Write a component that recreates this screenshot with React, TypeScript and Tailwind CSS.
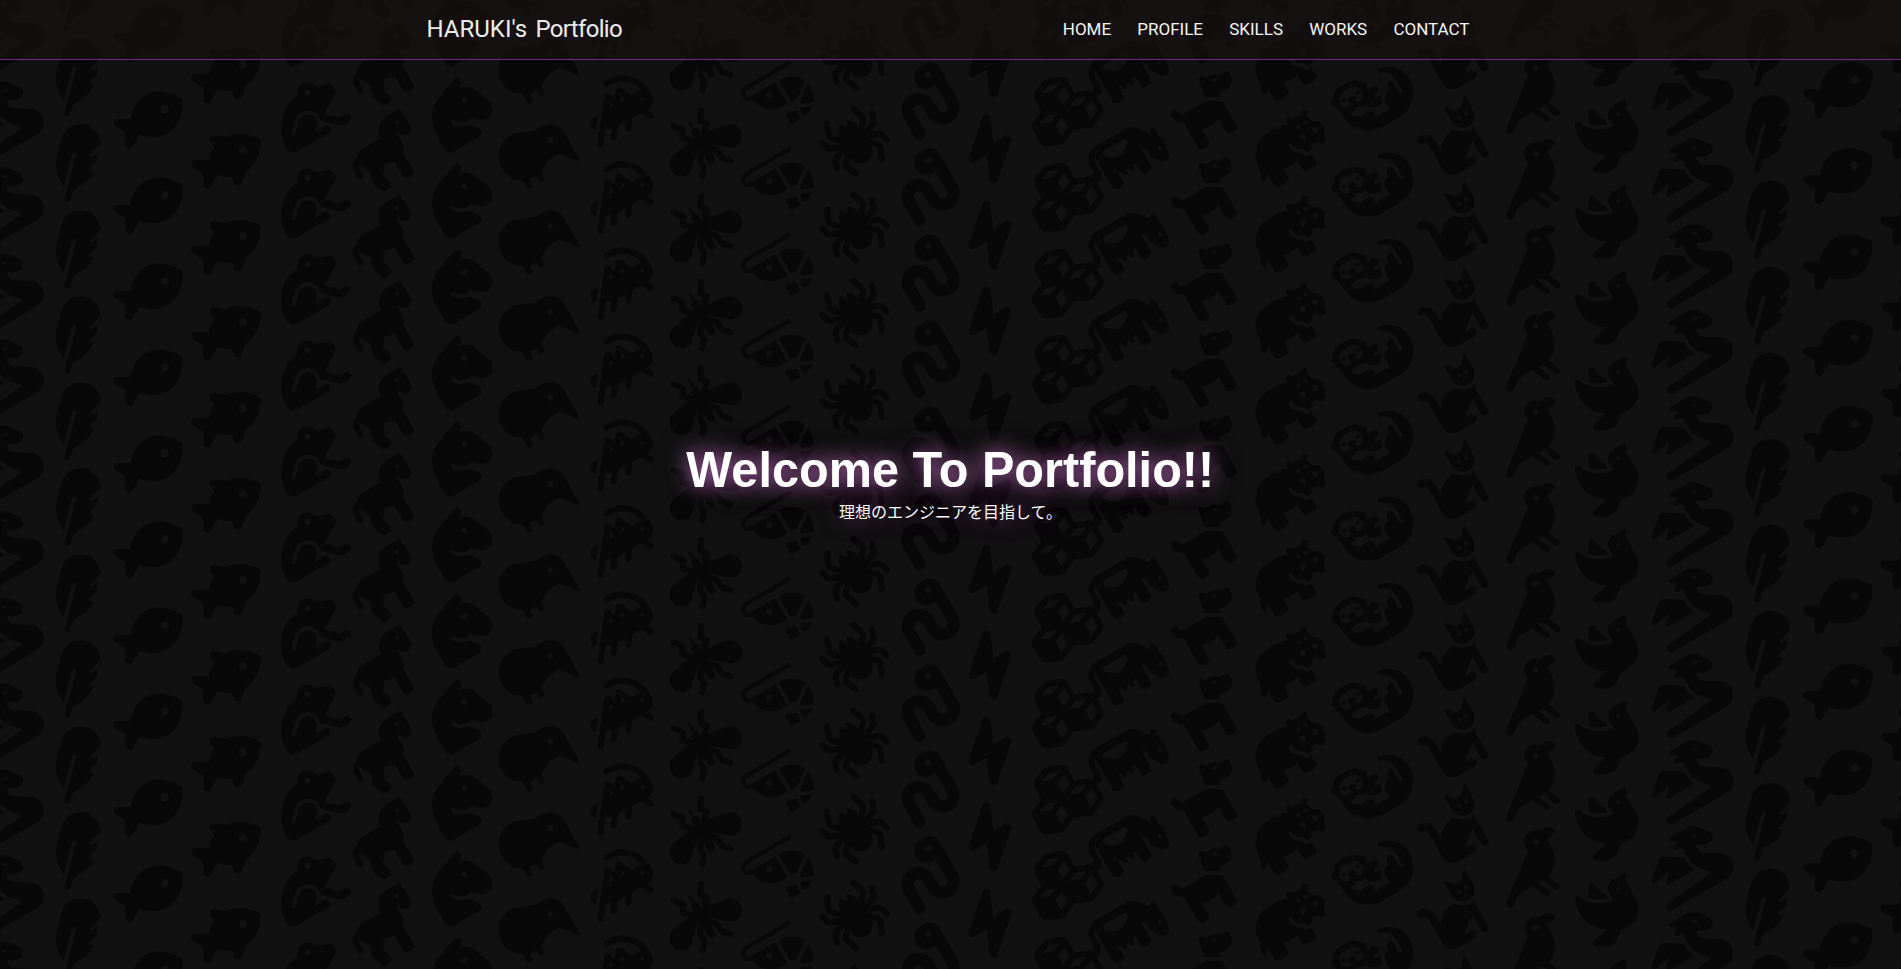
import type { IconType } from 'react-icons';
import {
  FaBolt, FaCat, FaCow, FaCrow, FaCubes, FaDog, FaDove, FaDragon, FaFeather, FaFish, FaFishFins,
  FaFrog, FaHippo, FaHorse, FaHorseHead, FaKiwiBird, FaLocust, FaMosquito, FaOtter, FaShrimp,
  FaSpider, FaWorm,
} from 'react-icons/fa6';

type Column = { Icon: IconType; x: number; size: number };

const COLUMNS: Column[] = [
  { Icon: FaFeather, x: 76.27, size: 64 },
  { Icon: FaFish, x: 151.17, size: 72 },
  { Icon: FaFishFins, x: 228.99, size: 72 },
  { Icon: FaFrog, x: 307.62, size: 72 },
  { Icon: FaHorse, x: 385.47, size: 72 },
  { Icon: FaHorseHead, x: 460.1, size: 80 },
  { Icon: FaKiwiBird, x: 534.99, size: 72 },
  { Icon: FaLocust, x: 616.67, size: 72 },
  { Icon: FaMosquito, x: 701.82, size: 80 },
  { Icon: FaShrimp, x: 779.92, size: 64 },
  { Icon: FaSpider, x: 854.5, size: 64 },
  { Icon: FaWorm, x: 925.7, size: 64 },
  { Icon: FaBolt, x: 990, size: 64 },
  { Icon: FaCubes, x: 1061.53, size: 72 },
  { Icon: FaCow, x: 1127.01, size: 80 },
  { Icon: FaDog, x: 1208.35, size: 72 },
  { Icon: FaHippo, x: 1289.81, size: 80 },
  { Icon: FaOtter, x: 1374.89, size: 80 },
  { Icon: FaCat, x: 1453.17, size: 72 },
  { Icon: FaCrow, x: 1531.37, size: 80 },
  { Icon: FaDove, x: 1609.57, size: 64 },
  { Icon: FaDragon, x: 1687.63, size: 80 },
];

const PERIOD_X = 1689.6;
const PERIOD_Y = 86;
const SLOPE = Math.tan(Math.PI / 6);
const WIDTH = 1901;
const HEIGHT = 969;

// Icons sit on parallel lines that rise by 30 degrees and repeat every 86px down.
const ICONS = [-PERIOD_X, 0, PERIOD_X].flatMap((offset) =>
  COLUMNS.flatMap(({ Icon, x, size }) => {
    const cx = x + offset;
    if (cx < -60 || cx > WIDTH + 60) return [];
    return Array.from({ length: 28 }, (_, row) => ({
      Icon,
      size,
      cx,
      cy: 32.56 - cx * SLOPE + PERIOD_Y * (row - 1),
    })).filter(({ cy }) => cy > -60 && cy < HEIGHT + 60);
  }),
);

const LINKS = ['HOME', 'PROFILE', 'SKILLS', 'WORKS', 'CONTACT'];

function Backdrop() {
  return (
    <svg
      aria-hidden="true"
      className="absolute inset-0 text-[#080808]"
      width={WIDTH}
      height={HEIGHT}
    >
      {ICONS.map(({ Icon, size, cx, cy }, index) => (
        <g key={index} transform={`translate(${cx.toFixed(2)} ${cy.toFixed(2)}) rotate(-30)`}>
          <Icon x={-size / 2} y={-size / 2} size={size} />
        </g>
      ))}
    </svg>
  );
}

function Header() {
  return (
    <header className="h-[60px] border-b border-[#6c2c80] bg-[#191210]/60 font-['Roboto','Liberation_Sans',sans-serif]">
      <div className="mx-auto flex h-full w-[1050px] items-center justify-between pr-[6px] pl-px">
        <a href="#home" className="flex gap-[8.5px] pb-px text-[24px] leading-8 text-[#ececec]">
          <span>HARUKI's</span>
          <span className="tracking-[-0.7px]">Portfolio</span>
        </a>
        <nav className="flex gap-[26.2px] pb-[2px] text-[17px] leading-6 text-[#f4f4f4]">
          {LINKS.map((label) => (
            <a key={label} href={`#${label.toLowerCase()}`}>
              {label}
            </a>
          ))}
        </nav>
      </div>
    </header>
  );
}

export default function App() {
  return (
    <div className="relative h-[969px] w-full overflow-hidden bg-[#111111] text-white">
      <Backdrop />
      <div className="relative flex h-full flex-col">
        <Header />
        <main className="flex flex-col items-center pt-[378px] whitespace-nowrap">
          <h1 className="scale-x-[0.973] font-['Liberation_Sans',sans-serif] text-[50px] leading-[64px] font-bold [text-shadow:0_0_22px_rgba(225,125,225,0.95),0_0_36px_rgba(0,0,0,0.4)]">
            Welcome To Portfolio!!
          </h1>
          <p className="-mt-[3px] font-['Noto_Sans_CJK_JP',sans-serif] text-base leading-6 [text-shadow:0_0_22px_rgba(225,125,225,0.6),0_0_30px_rgba(0,0,0,0.3)]">
            理想のエンジニアを目指して。
          </p>
        </main>
      </div>
    </div>
  );
}
